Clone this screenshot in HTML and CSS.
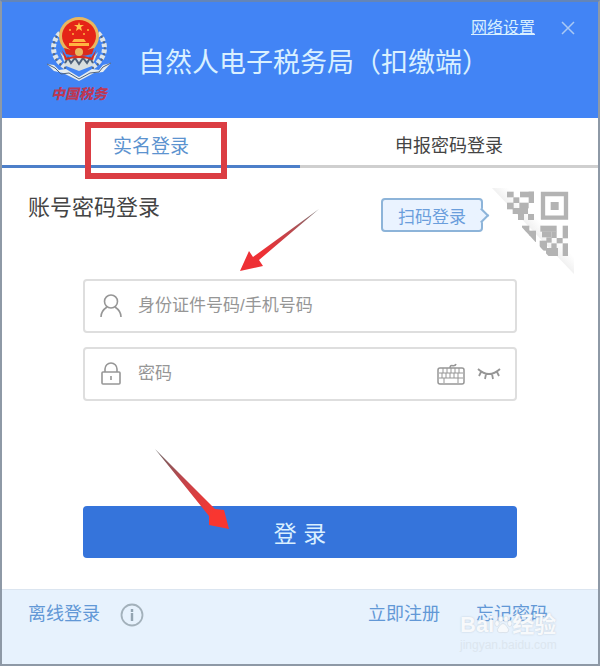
FILE: index.html
```html
<!DOCTYPE html>
<html lang="zh-CN">
<head>
    <meta charset="UTF-8">
    <meta name="viewport" content="width=device-width, initial-scale=1.0">
    <title>自然人电子税务局（扣缴端）</title>
    <link rel="stylesheet" href="styles.css">
</head>
<body>
    <div class="window">
        <header class="header">
            <div class="logo">
                <svg class="emblem" viewBox="0 0 66 66" width="66" height="68" aria-hidden="true">
                    <g fill="none" stroke="#dfe5e8" stroke-width="5" stroke-dasharray="4 2">
                        <path d="M14 17C4 27 5 43 21 52"/>
                        <path d="M52 17C62 27 61 43 45 52"/>
                    </g>
                    <g fill="none" stroke="#57677b" stroke-width="2" stroke-dasharray="2 4">
                        <path d="M11 20C3 33 8 46 21 53"/>
                        <path d="M55 20C63 33 58 46 45 53"/>
                        <path d="M16 39C20 47 26 51 33 53"/>
                        <path d="M50 39C46 47 40 51 33 53"/>
                    </g>
                    <path d="M14 36l6 14 13 5 13-5 6-14-6 6H20z" fill="#d9dfdf"/>
                    <path d="M19 47l3-5 3 5 4-5 4 6 4-6 4 5 3-5 3 5" fill="none" stroke="#4f6179" stroke-width="2"/>
                    <path d="M16 34l5 8q12-5 24 0l5-8-3 10q-14-4-28 0z" fill="#d92b1d"/>
                    <ellipse cx="33" cy="20" rx="20" ry="19" fill="#e9b75f"/>
                    <ellipse cx="33" cy="20" rx="17" ry="16" fill="#e52417"/>
                    <path d="M33 6l1 3h4l-3 2 1 4-3-2-3 2 1-4-3-2h4z" fill="#ffc54b"/>
                    <g fill="#ffb441">
                        <circle cx="24" cy="14" r="1"/><circle cx="27" cy="18" r="1"/>
                        <circle cx="38" cy="18" r="1"/><circle cx="42" cy="14" r="1"/>
                        <path d="M28 23h10l2 3H26zM23 27h20v3H23z"/>
                    </g>
                    <path d="M18 32q15 5 30 0l-2 6q-13 4-26 0z" fill="#d92b1d"/>
                    <circle cx="33" cy="36" r="4" fill="#e9b75f"/>
                    <path d="M1 48l7 1 5 5 7-1 13 8 13-8 7 1 4-5 8-2-8 9-9 1-15 8-16-8-9-2z" fill="#e6edf0"/>
                    <path d="M1 48l8 4 6 6 8-1 10 6 11-6 9-1 4-5 8-4" fill="none" stroke="#52637a" stroke-width="1"/>
                </svg>
                <span class="logo-name">中国税务</span>
            </div>
            <h1 class="title">自然人电子税务局（扣缴端）</h1>
            <div class="window-tools">
                <a class="network" href="#">网络设置</a>
                <button class="close" type="button" aria-label="关闭">
                    <svg viewBox="0 0 14 14" width="14" height="14"><path d="M1 1l12 12M13 1L1 13" fill="none" stroke="#a9c9f5" stroke-width="1.5"/></svg>
                </button>
            </div>
        </header>

        <nav class="tabs">
            <button class="tab active" type="button">实名登录</button>
            <button class="tab" type="button">申报密码登录</button>
        </nav>

        <main class="main">
            <div class="panel-head">
                <h2 class="subtitle">账号密码登录</h2>
                <button class="scan" type="button">扫码登录</button>
                <svg class="qr" viewBox="9 18 252 276" width="84" height="92" aria-hidden="true">
                    <defs>
                        <clipPath id="corner"><path d="M50 30h200v202h-65L50 86z"/></clipPath>
                        <linearGradient id="fold" x1="1" y1="0" x2="0" y2="1"><stop offset=".4" stop-color="#fff"/><stop offset=".52" stop-color="#eee"/></linearGradient>
                    </defs>
                    <path d="M12 24h60l186 190v68z" fill="url(#fold)"/>
                    <path d="M165 42h69v71h-69z" fill="#fff" stroke="#b3b3b3" stroke-width="13"/>
                    <g fill="#b3b3b3" clip-path="url(#corner)">
                        <rect x="188" y="66" width="24" height="24"/>
                        <rect x="57" y="35" width="20" height="17"/>
                        <rect x="96" y="35" width="42" height="17"/>
                        <rect x="122" y="35" width="16" height="34"/>
                        <rect x="76" y="52" width="18" height="17"/>
                        <rect x="57" y="68" width="20" height="20"/>
                        <rect x="94" y="68" width="28" height="17"/>
                        <rect x="74" y="84" width="46" height="18"/>
                        <rect x="90" y="100" width="18" height="20"/>
                        <rect x="120" y="102" width="18" height="18"/>
                        <rect x="102" y="137" width="22" height="18"/>
                        <rect x="124" y="152" width="20" height="34"/>
                        <rect x="112" y="152" width="14" height="20"/>
                        <rect x="157" y="137" width="49" height="18"/>
                        <rect x="162" y="154" width="28" height="18"/>
                        <rect x="190" y="154" width="16" height="20"/>
                        <rect x="224" y="137" width="16" height="38"/>
                        <rect x="175" y="172" width="16" height="16"/>
                        <rect x="155" y="182" width="22" height="30"/>
                        <rect x="206" y="174" width="18" height="16"/>
                        <rect x="190" y="190" width="16" height="16"/>
                        <rect x="174" y="204" width="36" height="24"/>
                        <rect x="224" y="190" width="16" height="38"/>
                    </g>
                </svg>
            </div>

            <form class="form">
                <div class="field">
                    <svg class="field-icon" viewBox="0 0 22 24" width="22" height="24" aria-hidden="true">
                        <g fill="none" stroke="#969696" stroke-width="1.6"><circle cx="11" cy="7.5" r="6.5"/><path d="M1 23c0-5 3-8 6-10M21 23c0-5-3-8-6-10"/></g>
                    </svg>
                    <input class="input" type="text" placeholder="身份证件号码/手机号码" aria-label="身份证件号码/手机号码">
                </div>
                <div class="field">
                    <svg class="field-icon" viewBox="0 0 22 24" width="22" height="24" aria-hidden="true">
                        <g fill="none" stroke="#969696" stroke-width="1.6"><rect x="2" y="10" width="18" height="12" rx="1"/><path d="M5 10V7a6 6 0 0 1 12 0v3M11 14v4"/></g>
                    </svg>
                    <input class="input" type="password" placeholder="密码" aria-label="密码">
                    <button class="tool" type="button" aria-label="软键盘">
                        <svg viewBox="0 0 28 22" width="28" height="22">
                            <g fill="none" stroke="#969696">
                                <path d="M13 5c0-5 5 0 6-4" stroke-width="1.5"/>
                                <rect x="1" y="5" width="26" height="16" rx="2" stroke-width="1.5"/>
                                <path d="M2 10h24M2 15h24M6 5v5M10 5v5M14 5v5M18 5v5M22 5v5M5 10v5M9 10v5M13 10v5M17 10v5M21 10v5M7 15v5M21 15v5"/>
                            </g>
                        </svg>
                    </button>
                    <button class="tool" type="button" aria-label="显示密码">
                        <svg viewBox="0 0 24 14" width="24" height="14"><path d="M1 2q11 10 22 0M4 5l-2 4M9 7l-1 5M15 7l1 5M20 5l2 4" fill="none" stroke="#969696" stroke-width="1.8"/></svg>
                    </button>
                </div>
                <button class="submit" type="submit">登 录</button>
            </form>
        </main>

        <footer class="footer">
            <a class="link" href="#">离线登录</a>
            <button class="info" type="button" aria-label="说明">
                <svg viewBox="0 0 24 24" width="24" height="24"><circle cx="12" cy="12" r="10.5" fill="none" stroke="#a3b1bb" stroke-width="1.8"/><path d="M12 6v3M12 10v8" stroke="#93a4b1" stroke-width="2.4"/></svg>
            </button>
            <a class="link register" href="#">立即注册</a>
            <a class="link" href="#">忘记密码</a>
        </footer>

        <!-- tutorial marks -->
        <div class="mark-box"></div>
        <svg class="arrow arrow-account" viewBox="0 0 82 64" width="82" height="64" aria-hidden="true">
            <defs><linearGradient id="fade1" x1="1" y1="0" x2="0" y2="1"><stop offset="0" stop-color="#777"/><stop offset=".4" stop-color="#c4444a"/><stop offset=".7" stop-color="#ee3035"/></linearGradient></defs>
            <path d="M81 1L21 52l4 6L2 63l9-20 4 6z" fill="url(#fade1)"/>
        </svg>
        <svg class="arrow arrow-submit" viewBox="0 0 78 84" width="78" height="84" aria-hidden="true">
            <defs><linearGradient id="fade2" x1="0" y1="0" x2="1" y2="1"><stop offset="0" stop-color="#666"/><stop offset=".4" stop-color="#c4444a"/><stop offset=".8" stop-color="#f93630"/></linearGradient></defs>
            <path d="M2 2l60 60 9 1 5 19-20-4 0-9z" fill="url(#fade2)"/>
        </svg>
        <div class="watermark">
            <span class="brand">Bai<svg class="paw" viewBox="0 0 24 24" width="18" height="20" aria-hidden="true"><g fill="#f7f9fb" stroke="#d3dce5"><ellipse cx="4" cy="10" rx="3" ry="4"/><ellipse cx="9" cy="4" rx="3" ry="4"/><ellipse cx="16" cy="4" rx="3" ry="4"/><ellipse cx="21" cy="10" rx="3" ry="4"/><path d="M12 10q3 0 5 4 4 4 2 7-2 2-7 1-5 1-7-1-2-3 2-7 2-4 5-4z"/></g></svg>经验</span>
            <span class="address">jingyan.baidu.com</span>
        </div>
    </div>
</body>
</html>
```
FILE: styles.css
```css
* {
    box-sizing: border-box;
}
body {
    margin: 0;
    font-family: "Liberation Sans", "Noto Sans CJK SC", sans-serif;
    color: #444;
    background-color: #fff;
}
button, input {
    font-family: inherit;
    padding: 0;
    border: 0;
    background: none;
}
button {
    cursor: pointer;
}
svg {
    display: block;
}
.window {
    position: relative;
    display: flex;
    flex-direction: column;
    min-height: 100vh;
    border: 2px solid #8e99a6;
    border-top-color: #6485b8;
}

/* header */
.header {
    display: flex;
    align-items: flex-start;
    height: 116px;
    padding: 13px 20px 0 44px;
    background-color: #4284f5;
}
.logo {
    display: flex;
    flex-direction: column;
    align-items: center;
    width: 66px;
}
.logo-name {
    font-size: 14px;
    line-height: 22px;
    font-style: italic;
    font-weight: 900;
    color: #bd3854;
    white-space: nowrap;
}
.title {
    margin: 30px 0 0 26px;
    font-size: 27px;
    line-height: 36px;
    font-weight: 400;
    color: #d9f0ff;
    white-space: nowrap;
}
/* the links sit above the end of the title */
.window-tools {
    display: flex;
    align-items: center;
    gap: 26px;
    margin-left: -18px;
}
.network {
    font-size: 16px;
    line-height: 26px;
    color: #d9f0ff;
    white-space: nowrap;
}

/* tabs */
.tabs {
    display: flex;
    height: 50px;
}
.tab {
    flex: 1;
    padding-top: 5px;
    font-size: 18px;
    color: #444;
    border-bottom: 3px solid #cfcfcf;
}
.tab.active {
    font-size: 19px;
    color: #5c93cf;
    border-bottom-color: #4d7fc9;
}

/* login form */
.main {
    flex: 1;
}
.panel-head {
    display: flex;
    align-items: flex-start;
    height: 111px;
    padding: 18px 23px 0 26px;
}
.subtitle {
    margin: 6px auto 0 0;
    font-size: 22px;
    line-height: 32px;
    font-weight: 400;
}
.scan {
    position: relative;
    width: 102px;
    height: 34px;
    margin: 12px 8px 0 0;
    font-size: 17px;
    color: #6a9edc;
    border: 2px solid #8db4d9;
    border-radius: 4px;
    background-color: #eaf3ff;
}
.scan::after {
    content: "";
    position: absolute;
    top: 10px;
    right: -6px;
    width: 9px;
    height: 9px;
    border: solid #8db4d9;
    border-width: 2px 2px 0 0;
    background-color: #eaf3ff;
    transform: rotate(45deg);
}
.form {
    display: flex;
    flex-direction: column;
    gap: 14px;
    margin: 0 81px;
}
.field {
    display: flex;
    align-items: center;
    height: 54px;
    padding: 0 14px 0 15px;
    border: 2px solid #dedede;
    border-radius: 4px;
}
.field-icon {
    margin-right: 16px;
}
.input {
    flex: 1;
    min-width: 0;
    height: 40px;
    font-size: 17px;
    color: #444;
    outline: none;
}
.input::placeholder {
    color: #969696;
}
.tool + .tool {
    margin-left: 12px;
}
.submit {
    height: 52px;
    margin-top: 91px;
    font-size: 23px;
    color: #d9efff;
    background-color: #3574db;
    border-radius: 4px;
}

/* footer */
.footer {
    display: flex;
    align-items: flex-start;
    height: 75px;
    padding: 11px 50px 0 26px;
    background-color: #e7f2fd;
    border-top: 1px solid #dbe5f0;
}
.link {
    font-size: 18px;
    line-height: 26px;
    color: #6298d6;
    text-decoration: none;
}
.info {
    margin: 2px auto 0 20px;
}
.register {
    margin-right: 36px;
}

/* marks drawn over the window */
.mark-box {
    position: absolute;
    top: 120px;
    left: 83px;
    width: 142px;
    height: 57px;
    border: 6px solid #db3d43;
    pointer-events: none;
}
.arrow {
    position: absolute;
    pointer-events: none;
}
.arrow-account {
    top: 206px;
    left: 236px;
}
.arrow-submit {
    top: 445px;
    left: 151px;
}
.watermark {
    position: absolute;
    right: 30px;
    bottom: 12px;
    width: 108px;
    pointer-events: none;
}
.brand {
    display: flex;
    align-items: center;
    font-size: 22px;
    line-height: 26px;
    font-weight: 700;
    color: #f7f9fb;
    text-shadow: 0 0 2px #bccad8;
    white-space: nowrap;
}
.address {
    display: block;
    font-size: 12px;
    line-height: 14px;
    color: #dce6ef;
}
```
